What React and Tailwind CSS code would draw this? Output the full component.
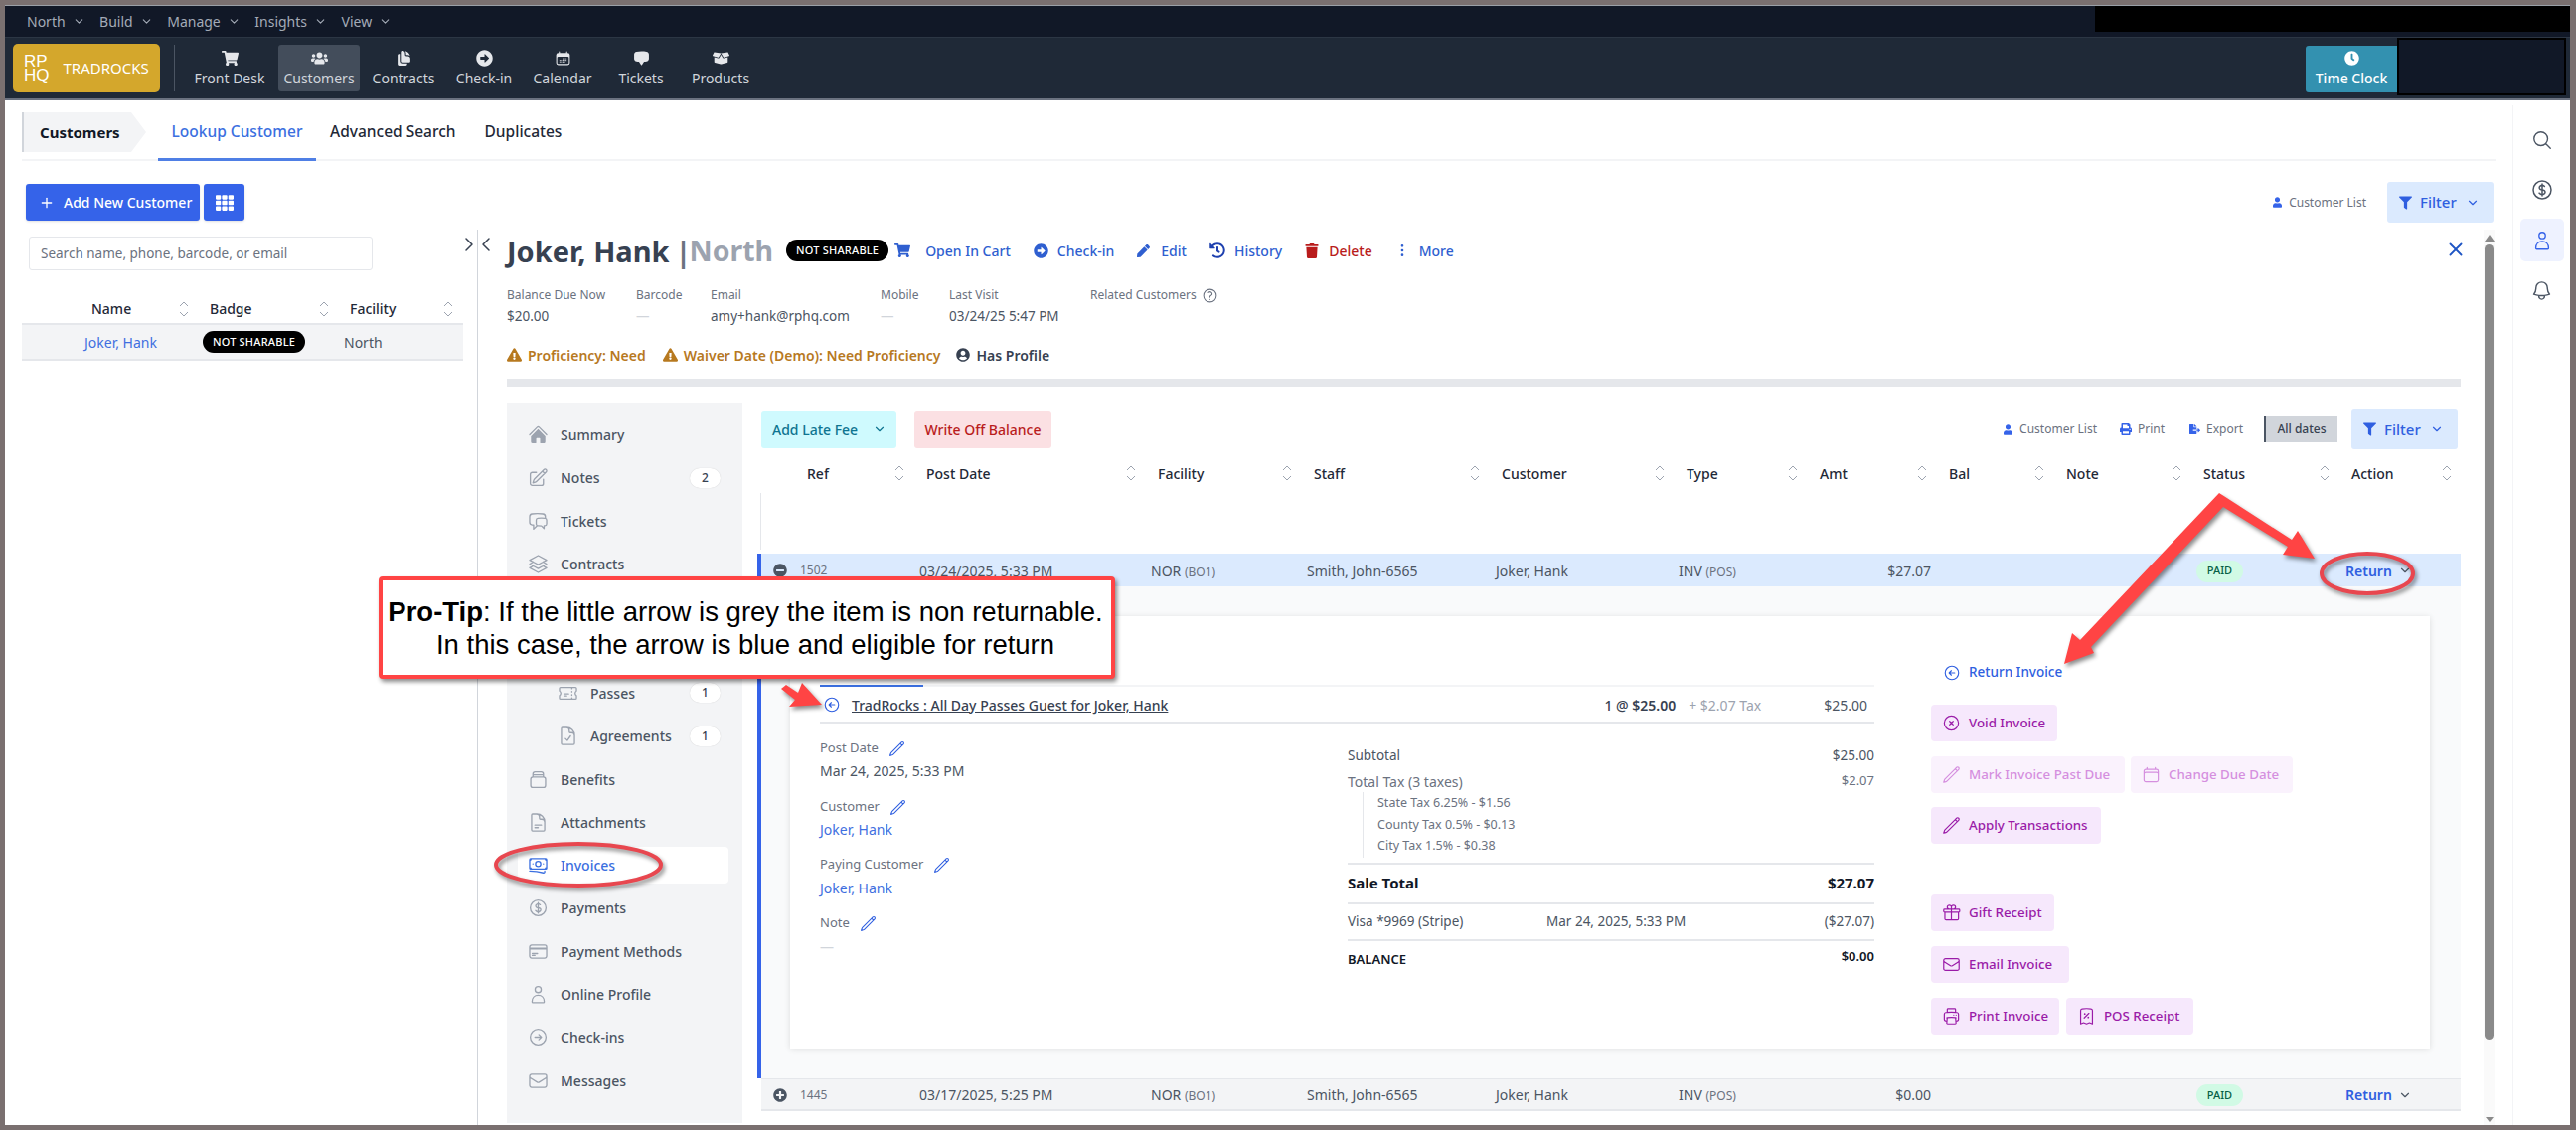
import React from 'react';
import { FaShoppingCart, FaUsers, FaArrowAltCircleRight, FaBoxOpen, FaClock, FaFilter, FaUser, FaPrint, FaFileExport, FaPen, FaHistory, FaTrash, FaExclamationTriangle, FaUserCircle, FaMinusCircle, FaPlusCircle, FaTh } from 'react-icons/fa';
import { HiHome, HiDocumentDuplicate, HiCalendarDays, HiChatBubbleBottomCenter, HiOutlinePencilSquare, HiOutlineChatBubbleLeftRight, HiOutlineTicket, HiOutlineDocumentCheck, HiOutlineDocumentText, HiOutlineBanknotes, HiOutlineCurrencyDollar, HiOutlineCreditCard, HiOutlineArrowRightCircle, HiOutlineEnvelope, HiOutlineSquare3Stack3D, HiOutlineArrowLeftCircle, HiOutlineXCircle, HiOutlinePencil, HiOutlineCalendar, HiOutlineGift, HiOutlinePrinter, HiOutlineReceiptPercent, HiOutlineQuestionMarkCircle, HiOutlineMagnifyingGlass, HiOutlineBell } from 'react-icons/hi2';
import { LuChevronDown, LuChevronLeft, LuChevronRight, LuPlus, LuX, LuEllipsisVertical } from 'react-icons/lu';

const Sort = () => (
  <svg width="10" height="18" viewBox="0 0 10 18" fill="none" stroke="#9ca3af" strokeWidth="1" className="shrink-0">
    <path d="M1 6l4-4 4 4M1 12l4 4 4-4" />
  </svg>
);

const Jar = ({ className }) => (
  <svg viewBox="0 0 24 24" fill="none" stroke="currentColor" strokeWidth="1.5" className={className}>
    <path d="M6 9V5.5A2.5 2.5 0 0 1 8.5 3h7A2.5 2.5 0 0 1 18 5.5V9M6 6.5h12" />
    <rect x="3.5" y="9" width="17" height="12" rx="2.5" />
  </svg>
);

const Person = ({ className }) => (
  <svg viewBox="0 0 24 24" fill="none" stroke="currentColor" strokeWidth="1.5" className={className}>
    <circle cx="12" cy="6.5" r="3.5" />
    <path d="M5 20.5c0-4.5 3-7.5 7-7.5s7 3 7 7.5c0 .5-.5 1-1 1H6c-.5 0-1-.5-1-1z" />
  </svg>
);

const Badge = () => (
  <span className="inline-flex items-center justify-center w-[103px] h-[22px] rounded-full bg-black text-white text-[11px] font-medium tracking-[0.2px]">NOT SHARABLE</span>
);

const menu = ['North', 'Build', 'Manage', 'Insights', 'View'];
const nav = [
  ['Front Desk', FaShoppingCart, 'w-[80px] ml-[15px]', ''],
  ['Customers', FaUsers, 'w-[82px] ml-[9px]', 'bg-[#434d5b]'],
  ['Contracts', HiDocumentDuplicate, 'w-[78px] ml-[5px]', ''],
  ['Check-in', FaArrowAltCircleRight, 'w-[74px] ml-[5px]', ''],
  ['Calendar', HiCalendarDays, 'w-[74px] ml-[5px]', ''],
  ['Tickets', HiChatBubbleBottomCenter, 'w-[74px] ml-[5px]', ''],
  ['Products', FaBoxOpen, 'w-[76px] ml-[5px]', ''],
];

const sideItems = [
  ['Summary', HiHome],
  ['Notes', HiOutlinePencilSquare, '2'],
  ['Tickets', HiOutlineChatBubbleLeftRight],
  ['Contracts', HiOutlineSquare3Stack3D],
  null,
  null,
  ['Passes', HiOutlineTicket, '1', true],
  ['Agreements', HiOutlineDocumentCheck, '1', true],
  ['Benefits', Jar],
  ['Attachments', HiOutlineDocumentText],
  ['Invoices', HiOutlineBanknotes, null, false, true],
  ['Payments', HiOutlineCurrencyDollar],
  ['Payment Methods', HiOutlineCreditCard],
  ['Online Profile', Person],
  ['Check-ins', HiOutlineArrowRightCircle],
  ['Messages', HiOutlineEnvelope],
];

const colTemplate = 'grid-cols-[152px_233px_157px_189px_186px_134px_130px_118px_138px_149px_123px]';
const cols = ['Ref', 'Post Date', 'Facility', 'Staff', 'Customer', 'Type', 'Amt', 'Bal', 'Note', 'Status', 'Action'];

const Row = ({ open, id, date, amt, cls }) => (
  <div className={`grid ${colTemplate} items-center h-[33px] pt-[1px] text-[14px] text-[#4b5563] ${cls}`}>
    <div className="flex items-center pl-[12px]">
      {open ? <FaMinusCircle className="w-[14px] h-[14px] text-[#4b5563]" /> : <FaPlusCircle className="w-[14px] h-[14px] text-[#4b5563]" />}
      <span className="ml-[13px] text-[12px] text-[#6b7280]">{id}</span>
    </div>
    <div className="pl-[7px]">{date}</div>
    <div className="pl-[7px]">NOR <span className="text-[12px] text-[#6b7280]">(BO1)</span></div>
    <div className="pl-[7px]">Smith, John-6565</div>
    <div className="pl-[8px]">Joker, Hank</div>
    <div className="pl-[6px]">INV <span className="text-[12px] text-[#6b7280]">(POS)</span></div>
    <div className="text-right pr-[4px]">{amt}</div>
    <div />
    <div />
    <div className="pl-[7px]">
      <span className="inline-flex items-center justify-center w-[47px] h-[22px] rounded-full bg-[#d1fae5] text-[#065f46] text-[11px] font-medium">PAID</span>
    </div>
    <div className="pl-[8px] flex items-center text-[#2f5fe0] font-semibold">
      Return
      <LuChevronDown className="w-[14px] h-[14px] ml-[6px] text-[#4b5563]" />
    </div>
  </div>
);

const PurpleBtn = ({ icon: Icon, children, w, faded, cls = '' }) => (
  <div className={`flex items-center h-[37px] rounded-[4px] pl-[11px] text-[13.3px] font-medium ${w} ${faded ? 'bg-[#faf2fd] text-[#d58fdf]' : 'bg-[#f6e8fc] text-[#9a1ba8]'} ${cls}`}>
    <Icon className="w-[19px] h-[19px] mr-[8px] shrink-0" />
    {children}
  </div>
);

const FieldLabel = ({ children, cls }) => (
  <div className={`flex items-center h-[20px] text-[13px] text-[#6b7280] ${cls}`}>
    {children}
    <HiOutlinePencil className="w-[17px] h-[17px] ml-[10px] text-[#2f5fe0]" />
  </div>
);

const TaxLine = ({ children }) => <div className="h-[21.5px] flex items-center text-[12.5px] text-[#6b7280]">{children}</div>;

export default function App() {
  return (
    <div className="relative w-[2592px] h-[1137px] overflow-hidden bg-[#7a7070] pt-[5px] pl-[5px] pr-[6px] pb-[5px] font-['Noto_Sans',sans-serif]">
      <div className="flex flex-col h-full bg-white">
        {/* top menu */}
        <div className="flex items-center h-[32px] bg-[#111827] border-t border-[#9aa0a8] pl-[22px] text-[14px] text-[#a4abb7]">
          {menu.map((m) => (
            <div key={m} className="flex items-center mr-[14.5px]">
              {m}
              <LuChevronDown className="w-[13px] h-[13px] ml-[7px]" />
            </div>
          ))}
          <div className="ml-auto self-start w-[478px] h-[26px] bg-black" />
        </div>
        {/* nav */}
        <div className="flex items-center h-[64px] bg-[#1f2937] border-t border-[#2c3644] border-b-2 border-b-[#6b7280]">
          <div className="flex items-center ml-[8px] w-[148px] h-[49px] rounded-[5px] bg-[#d4a72c] text-white pl-[11px]">
            <div className="font-['Liberation_Sans',Arial,sans-serif] text-[17px]">
              <div className="h-[14px] leading-[14px]">RP</div>
              <div className="h-[14px] leading-[14px]">HQ</div>
            </div>
            <div className="ml-[14px] text-[15px]">TRADROCKS</div>
          </div>
          <div className="ml-[14px] w-px h-[47px] bg-[#4b5563]" />
          {nav.map(([label, Icon, w, bg]) => (
            <div key={label} className={`flex flex-col items-center justify-center h-[47px] rounded-[3px] text-[14px] text-[#d1d5db] ${w} ${bg}`}>
              <Icon className="w-[17px] h-[17px] mb-[3px] text-[#e5e7eb]" />
              <span className="leading-[18px]">{label}</span>
            </div>
          ))}
          <div className="ml-auto flex items-start self-start mt-[8px] mr-[4px]">
            <div className="flex flex-col items-center justify-center w-[92px] h-[47px] rounded-l-[3px] bg-[#3391b0] text-white text-[14px] font-medium">
              <FaClock className="w-[15px] h-[15px] mb-[4px]" />
              <span className="leading-[18px]">Time Clock</span>
            </div>
            <div className="w-[170px] h-[58px] bg-[#111827] border-2 border-black -mt-[8px]" />
          </div>
        </div>
        {/* body */}
        <div className="flex flex-1 min-h-0">
          <div className="flex flex-col flex-1 min-w-0">
            {/* tabs */}
            <div className="flex ml-[17px] mr-[16px] mt-[12px] h-[49px] border-b-[2px] border-[#f3f4f6]">
              <div className="flex items-center w-[125px] h-[40px] pl-[16px] bg-[#f3f4f6] border-l-2 border-[#d1d5db] text-[15px] font-bold text-[#111827] [clip-path:polygon(0_0,88%_0,100%_50%,88%_100%,0_100%)]">Customers</div>
              <div className="flex items-start justify-center ml-[12px] w-[159px] h-[49px] pt-[8px] border-b-[3px] border-[#4f7fe5] text-[15.5px] font-medium text-[#3b6fe0]">Lookup Customer</div>
              <div className="ml-[14px] pt-[8px] text-[15.5px] font-medium text-[#1f2937]">Advanced Search</div>
              <div className="ml-[29px] pt-[8px] text-[15.5px] font-medium text-[#1f2937]">Duplicates</div>
            </div>
            {/* toolbar */}
            <div className="flex items-center ml-[21px] mr-[19px] mt-[21px] h-[41px]">
              <div className="flex items-center w-[175px] h-[37px] rounded-[3px] bg-[#3563e9] text-white text-[14px] font-medium pl-[13px] shadow-sm">
                <LuPlus className="w-[16px] h-[16px] mr-[9px]" />
                Add New Customer
              </div>
              <div className="flex items-center justify-center ml-[4px] w-[41px] h-[37px] rounded-[3px] bg-[#3563e9] text-white shadow-sm">
                <FaTh className="w-[18px] h-[18px]" />
              </div>
              <div className="ml-auto flex items-center text-[12px] text-[#6b7280]">
                <FaUser className="w-[9px] h-[11px] text-[#3563e9] mr-[7px]" />
                Customer List
              </div>
              <div className="flex items-center ml-[21px] w-[107px] h-[41px] rounded-[3px] bg-[#dbeafe] text-[#2f5fe0] text-[15px] font-medium pl-[12px]">
                <FaFilter className="w-[13px] h-[14px] mr-[8px]" />
                Filter
                <LuChevronDown className="w-[14px] h-[14px] ml-[9px]" />
              </div>
            </div>
            {/* lower */}
            <div className="flex flex-1 min-h-0 mt-[7px]">
              {/* left list */}
              <div className="w-[475px] shrink-0 pl-[17px] pr-[14px]">
                <input readOnly placeholder="Search name, phone, barcode, or email" className="block ml-[7px] mt-[7px] w-[346px] h-[34px] rounded-[3px] border border-[#e5e7eb] px-[11px] text-[13.5px] placeholder:text-[#6b7280] outline-none" />
                <div className="grid grid-cols-[176px_141px_127px] h-[53px] items-center text-[14px] font-medium text-[#1f2937] pt-[24px] box-border">
                  <div className="flex items-center justify-between pl-[70px] pr-[8px]">Name<Sort /></div>
                  <div className="flex items-center justify-between pl-[13px] pr-[8px]">Badge<Sort /></div>
                  <div className="flex items-center justify-between pl-[13px] pr-[10px]">Facility<Sort /></div>
                </div>
                <div className="grid grid-cols-[176px_141px_127px] h-[38px] items-center bg-[#f3f4f6] border-t-2 border-b-2 border-[#e5e7eb] text-[14px] text-[#4b5563]">
                  <div className="pl-[63px] text-[#3f6fe0]">Joker, Hank</div>
                  <div className="pl-[6px] flex"><Badge /></div>
                  <div className="pl-[7px]">North</div>
                </div>
              </div>
              {/* right panel */}
              <div className="relative flex flex-1 min-w-0 h-full border-l-[1px] border-[#d1d5db]">
                <LuChevronRight className="absolute left-[-21px] top-[2px] w-[24px] h-[26px] text-[#374151]" strokeWidth={1.5} />
                <LuChevronLeft className="absolute left-[-4px] top-[2px] w-[24px] h-[26px] text-[#374151]" strokeWidth={1.5} />
                <div className="flex flex-col w-[2018px] shrink-0 pl-[29px]">
                  {/* title */}
                  <div className="flex items-center h-[42px] relative">
                    <div className="flex items-center text-[29px] font-bold text-[#374151] leading-none whitespace-nowrap">
                      <span>Joker, Hank</span>
                      <span className="ml-[6px] text-[#6b7280]">|</span>
                      <span className="ml-[-2px] text-[28.5px] text-[#9ca3af]">North</span>
                    </div>
                    <div className="ml-[13px] flex"><Badge /></div>
                    <div className="flex items-center ml-[6px] text-[14px] font-medium text-[#2f5fd0]">
                      <FaShoppingCart className="w-[16px] h-[16px] mr-[15px]" /> Open In Cart
                      <FaArrowAltCircleRight className="w-[15px] h-[15px] ml-[23px] mr-[9px]" /> Check-in
                      <FaPen className="w-[13px] h-[13px] ml-[23px] mr-[11px]" /> Edit
                      <FaHistory className="w-[16px] h-[16px] ml-[23px] mr-[9px] text-[#1e40af]" /> History
                      <FaTrash className="w-[14px] h-[15px] ml-[23px] mr-[10px] text-[#b91c1c]" /> <span className="text-[#b91c1c]">Delete</span>
                      <LuEllipsisVertical className="w-[16px] h-[16px] ml-[22px] mr-[9px]" /> More
                    </div>
                    <LuX className="absolute left-[1950px] top-[9px] w-[22px] h-[22px] text-[#1e55c4]" />
                  </div>
                  {/* info */}
                  <div className="flex mt-[15px] text-[12px] text-[#6b7280]">
                    {[['Balance Due Now', '$20.00', 'w-[130px]'], ['Barcode', '—', 'w-[75px]'], ['Email', 'amy+hank@rphq.com', 'w-[171px]'], ['Mobile', '—', 'w-[69px]'], ['Last Visit', '03/24/25 5:47 PM', 'w-[142px]']].map(([l, v, w]) => (
                      <div key={l} className={w}>
                        <div className="h-[18px] leading-[18px]">{l}</div>
                        <div className={`h-[20px] leading-[20px] mt-[2px] text-[13.5px] ${v === '—' ? 'text-[#d1d5db]' : 'text-[#4b5563]'}`}>{v}</div>
                      </div>
                    ))}
                    <div className="flex items-center h-[18px]">Related Customers<HiOutlineQuestionMarkCircle className="w-[17px] h-[17px] ml-[5px]" /></div>
                  </div>
                  {/* alerts */}
                  <div className="flex items-center mt-[19px] h-[20px] text-[14px] font-semibold text-[#b7791f]">
                    <FaExclamationTriangle className="w-[15px] h-[14px] mr-[6px]" /> Proficiency: Need
                    <FaExclamationTriangle className="w-[15px] h-[14px] ml-[17px] mr-[6px]" /> Waiver Date (Demo): Need Proficiency
                    <FaUserCircle className="w-[14px] h-[14px] ml-[15px] mr-[7px] text-[#374151]" /> <span className="text-[#374151]">Has Profile</span>
                  </div>
                  <div className="mt-[14px] h-[8px] w-[1966px] bg-[#e5e7eb]" />
                  {/* main */}
                  <div className="flex mt-[16px] flex-1 min-h-0">
                    <div className="w-[237px] shrink-0 h-[725px] bg-[#f3f4f6] pt-[11px]">
                      {sideItems.map((it, i) => {
                        if (!it) return <div key={i} className="h-[43.3px]" />;
                        const [label, Icon, count, sub, active] = it;
                        return (
                          <div key={label} className={`flex items-center h-[43.3px] text-[14px] font-medium ${sub ? 'pl-[51px]' : 'pl-[21px]'}`}>
                            <div className={`flex flex-1 items-center h-[37px] mr-[14px] rounded-[4px] -ml-[10px] pl-[10px] ${active ? 'bg-white text-[#3b6fe0]' : 'text-[#4b5563]'}`}>
                              <Icon className={`w-[21px] h-[21px] mr-[12px] ${active ? 'text-[#3b6fe0]' : 'text-[#9ca3af]'}`} />
                              <span>{label}</span>
                              {count && <span className="ml-auto mr-[8px] flex items-center justify-center w-[31px] h-[20px] rounded-full bg-white text-[12px] text-[#374151] shadow-[0_0_1px_rgba(0,0,0,0.2)]">{count}</span>}
                            </div>
                          </div>
                        );
                      })}
                    </div>
                    <div className="ml-[15px] w-[1714px] shrink-0">
                      {/* table toolbar */}
                      <div className="flex items-center h-[40px] mt-[7px] pl-[4px]">
                        <div className="flex items-center w-[136px] h-[37px] rounded-[3px] bg-[#cffafe] text-[#0e7490] text-[14px] font-medium pl-[11px]">
                          Add Late Fee
                          <LuChevronDown className="w-[14px] h-[14px] ml-[15px]" />
                        </div>
                        <div className="flex items-center justify-center ml-[18px] w-[138px] h-[37px] rounded-[3px] bg-[#fbe0e3] text-[#b91c1c] text-[14px] font-medium">Write Off Balance</div>
                        <div className="ml-auto flex items-center text-[12px] text-[#6b7280]">
                          <FaUser className="w-[9px] h-[11px] text-[#3563e9] mr-[7px]" />Customer List
                          <FaPrint className="w-[12px] h-[12px] text-[#3563e9] ml-[23px] mr-[6px]" />Print
                          <FaFileExport className="w-[11px] h-[12px] text-[#3563e9] ml-[25px] mr-[6px]" />Export
                        </div>
                        <div className="flex items-center justify-center ml-[21px] w-[74px] h-[26px] bg-[#d1d5db] border-l-2 border-[#4b5563] text-[12px] font-medium text-[#374151]">All dates</div>
                        <div className="flex items-center ml-[14px] mr-[3px] w-[107px] h-[40px] rounded-[3px] bg-[#dbeafe] text-[#2f5fe0] text-[15px] font-medium pl-[12px]">
                          <FaFilter className="w-[13px] h-[14px] mr-[8px]" />
                          Filter
                          <LuChevronDown className="w-[14px] h-[14px] ml-[9px]" />
                        </div>
                      </div>
                      {/* table header */}
                      <div className={`grid ${colTemplate} items-center h-[40px] ml-[4px] text-[14px] font-medium text-[#1f2937] mt-[4px]`}>
                        {cols.map((c, i) => (
                          <div key={c} className={`flex items-center justify-between pr-[8px] ${i === 0 ? 'pl-[46px]' : 'pl-[14px]'}`}>
                            <span>{c}</span>
                            <Sort />
                          </div>
                        ))}
                      </div>
                      <div className="h-[61px] ml-[3px]"><div className="h-[57px] border-l border-[#e5e7eb]" /></div>
                      {/* expanded */}
                      <div className="border-l-4 border-[#3563e9]">
                        <Row open id="1502" date="03/24/2025, 5:33 PM" amt="$27.07" cls="bg-[#dbeafe]" />
                        <div className="h-[495px] bg-[#f9fafb] pt-[30px] pl-[29px]">
                          <div className="flex w-[1650px] h-[435px] bg-white shadow-[0_1px_6px_rgba(0,0,0,0.12)] pl-[30px]">
                            <div className="w-[1061px] shrink-0 pt-[69px]">
                              <div className="h-[2px] bg-[#f3f4f6]"><div className="w-[104px] h-[2px] bg-[#3b6fe0]" /></div>
                              <div className="flex items-center h-[35px] pt-[1px] text-[14px]">
                                <HiOutlineArrowLeftCircle className="w-[18px] h-[18px] ml-[3px] text-[#2f5fe0]" />
                                <span className="ml-[11px] font-medium text-[#374151] underline">TradRocks : All Day Passes Guest for Joker, Hank</span>
                                <span className="ml-auto font-medium text-[#374151]">1 @ <span className="font-semibold">$25.00</span></span>
                                <span className="ml-[13px] text-[#9ca3af]">+ $2.07 Tax</span>
                                <span className="ml-[63px] mr-[7px] text-[#4b5563]">$25.00</span>
                              </div>
                              <div className="h-[2px] bg-[#e5e7eb]" />
                              <div className="flex">
                                <div className="w-[531px] shrink-0 pt-[15px] text-[14px]">
                                  <FieldLabel>Post Date</FieldLabel>
                                  <div className="mt-[1px] h-[23px] leading-[23px] text-[#4b5563]">Mar 24, 2025, 5:33 PM</div>
                                  <FieldLabel cls="mt-[15px]">Customer</FieldLabel>
                                  <div className="mt-[1px] h-[23px] leading-[23px] text-[#3f6fe0]">Joker, Hank</div>
                                  <FieldLabel cls="mt-[14px]">Paying Customer</FieldLabel>
                                  <div className="mt-[2px] h-[23px] leading-[23px] text-[#3f6fe0]">Joker, Hank</div>
                                  <FieldLabel cls="mt-[14px]">Note</FieldLabel>
                                  <div className="mt-[3px] h-[20px] text-[#d1d5db]">—</div>
                                </div>
                                <div className="w-[530px] shrink-0 pt-[22px] text-[13.5px] text-[#4b5563]">
                                  <div className="flex justify-between h-[20px] items-center"><span>Subtotal</span><span>$25.00</span></div>
                                  <div className="flex justify-between h-[20px] items-center mt-[6px] text-[#6b7280]"><span className="text-[14px]">Total Tax (3 taxes)</span><span className="text-[13px]">$2.07</span></div>
                                  <div className="ml-[15px] pl-[14px] border-l border-[#e5e7eb] mt-[1px] pt-[1px]">
                                    <TaxLine>State Tax 6.25% - $1.56</TaxLine>
                                    <TaxLine>County Tax 0.5% - $0.13</TaxLine>
                                    <TaxLine>City Tax 1.5% - $0.38</TaxLine>
                                  </div>
                                  <div className="h-[2px] bg-[#e5e7eb] mt-[5px]" />
                                  <div className="flex justify-between items-center h-[38px] text-[15px] font-bold text-[#111827]"><span>Sale Total</span><span>$27.07</span></div>
                                  <div className="h-[2px] bg-[#e5e7eb]" />
                                  <div className="flex items-center h-[35px]">
                                    <span className="w-[200px]">Visa *9969 (Stripe)</span>
                                    <span>Mar 24, 2025, 5:33 PM</span>
                                    <span className="ml-auto">($27.07)</span>
                                  </div>
                                  <div className="h-[2px] bg-[#e5e7eb]" />
                                  <div className="flex justify-between h-[38px] pt-[6px] text-[13px] font-semibold text-[#111827]"><span className="pt-[3px]">BALANCE</span><span>$0.00</span></div>
                                </div>
                              </div>
                            </div>
                            <div className="ml-[57px] pt-[38px]">
                              <div className="flex items-center h-[37px] pl-[12px] text-[13.5px] font-medium text-[#2f5fe0]">
                                <HiOutlineArrowLeftCircle className="w-[18px] h-[18px] mr-[8px]" />
                                Return Invoice
                              </div>
                              <PurpleBtn icon={HiOutlineXCircle} w="w-[127px]" cls="mt-[14px]">Void Invoice</PurpleBtn>
                              <div className="flex mt-[15px]">
                                <PurpleBtn icon={HiOutlinePencil} w="w-[195px]" faded>Mark Invoice Past Due</PurpleBtn>
                                <PurpleBtn icon={HiOutlineCalendar} w="w-[163px]" faded cls="ml-[6px]">Change Due Date</PurpleBtn>
                              </div>
                              <PurpleBtn icon={HiOutlinePencil} w="w-[171px]" cls="mt-[14px]">Apply Transactions</PurpleBtn>
                              <PurpleBtn icon={HiOutlineGift} w="w-[124px]" cls="mt-[51px]">Gift Receipt</PurpleBtn>
                              <PurpleBtn icon={HiOutlineEnvelope} w="w-[139px]" cls="mt-[15px]">Email Invoice</PurpleBtn>
                              <div className="flex mt-[15px]">
                                <PurpleBtn icon={HiOutlinePrinter} w="w-[129px]">Print Invoice</PurpleBtn>
                                <PurpleBtn icon={HiOutlineReceiptPercent} w="w-[128px]" cls="ml-[7px]">POS Receipt</PurpleBtn>
                              </div>
                            </div>
                          </div>
                        </div>
                      </div>
                      <div className="ml-[4px]">
                        <Row id="1445" date="03/17/2025, 5:25 PM" amt="$0.00" cls="bg-[#f3f4f6] border-t border-b-2 border-[#e5e7eb]" />
                      </div>
                    </div>
                  </div>
                </div>
                {/* scrollbar */}
                <div className="relative flex flex-col items-center w-[11px] shrink-0 bg-[#fafafa]">
                  <div className="mt-[5px] w-0 h-0 border-x-[5px] border-x-transparent border-b-[7px] border-b-[#8a8a8a]" />
                  <div className="mt-[3px] w-[9px] h-[800px] rounded-full bg-[#8a8a8a]" />
                  <div className="mt-auto mb-[3px] w-0 h-0 border-x-[4px] border-x-transparent border-t-[5px] border-t-[#8a8a8a]" />
                </div>
              </div>
            </div>
          </div>
          {/* rail */}
          <div className="w-[58px] shrink-0 flex flex-col items-center border-l border-[#f3f4f6] mt-[5px] pt-[24px] text-[#4b5563]">
            <HiOutlineMagnifyingGlass className="w-[22px] h-[22px]" />
            <HiOutlineCurrencyDollar className="w-[24px] h-[24px] mt-[27px]" />
            <div className="flex items-center justify-center w-[44px] h-[43px] mt-[17px] rounded-[5px] bg-[#eef2ff] text-[#3563e9]">
              <Person className="w-[22px] h-[22px]" />
            </div>
            <HiOutlineBell className="w-[23px] h-[23px] mt-[18px]" />
          </div>
        </div>
      </div>

      {/* annotations */}
      <svg className="absolute left-0 top-0 w-[2592px] h-[1137px] pointer-events-none drop-shadow-[2px_3px_2px_rgba(0,0,0,0.45)]" viewBox="0 0 2592 1137">
        <polygon fill="#ff4444" points="2233,496 2306,543 2312,534 2329,562 2297,558 2302,550 2237,510 2104,651 2107,657 2077,668 2085,637 2093,644" />
        <polygon fill="#ff4444" points="786,693 791,689 803,697 807,687 827,709 794,711 800,704" />
        <ellipse cx="2382" cy="577" rx="46" ry="20" fill="none" stroke="#e8474f" strokeWidth="4" />
        <ellipse cx="582" cy="870" rx="83" ry="21" fill="none" stroke="#e8474f" strokeWidth="4" />
      </svg>
      <div className="absolute left-[381px] top-[580px] w-[741px] h-[103px] flex flex-col items-center justify-center bg-white border-[4px] border-[#ff4444] rounded-[4px] shadow-[2px_3px_4px_rgba(0,0,0,0.45)] font-['Liberation_Sans',Arial,sans-serif] text-[27.5px] leading-[33px] text-black">
        <div className="pr-[3px]"><b>Pro-Tip</b>: If the little arrow is grey the item is non returnable.</div>
        <div className="pr-[3px]">In this case, the arrow is blue and eligible for return</div>
      </div>
    </div>
  );
}
